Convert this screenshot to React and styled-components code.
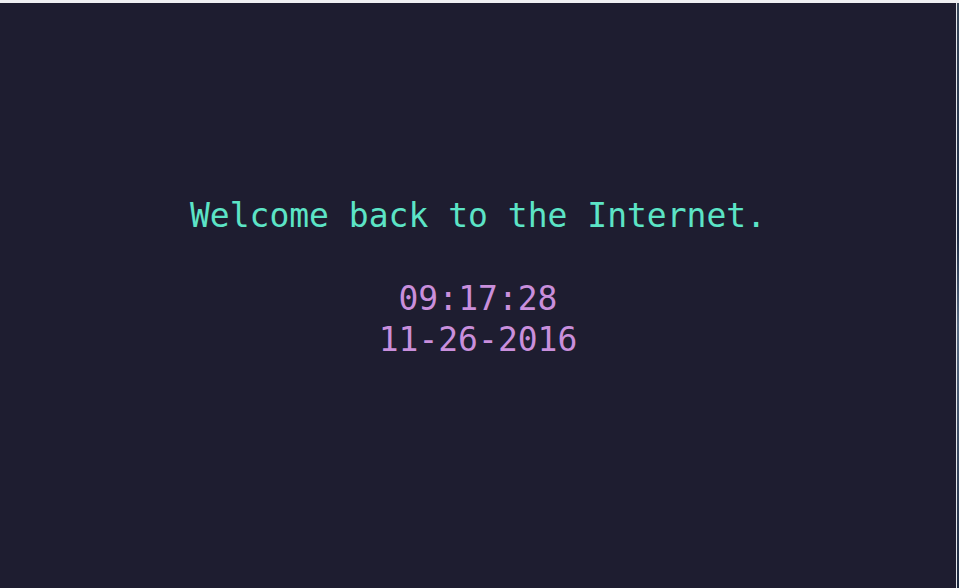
import React, { useState } from "react";
import styled, { createGlobalStyle } from "styled-components";

const GlobalStyle = createGlobalStyle`
  html, body {
    margin: 0;
    padding: 0;
    height: 100%;
    overflow: hidden;
    background: #1e1d30;
  }
  #root {
    height: 100%;
  }
`;

const Frame = styled.div`
  display: flex;
  height: 100vh;
  border-top: 3px solid #efeff2;
  box-sizing: border-box;
`;

const Screen = styled.main`
  flex: 1;
  display: flex;
  flex-direction: column;
  align-items: center;
  padding-top: 192px;
  background: #1e1d30;
  font-family: "DejaVu Sans Mono", "Liberation Mono", monospace;
  font-size: 33px;
  line-height: 41px;
`;

const Edge = styled.div`
  width: 2px;
  border-left: 1px solid #e6e8ec;
  background: linear-gradient(#3b4a5c, #23324a 40%, #5d7188 55%, #1e2a40);
`;

const Greeting = styled.p`
  margin: 0 0 42px;
  color: #5ce4c6;
`;

const Stamp = styled.div`
  color: #c98fdc;
  text-align: center;
`;

const pad = (n) => n.toString().padStart(2, "0");

const App = () => {
  const [now] = useState(new Date(2016, 10, 26, 9, 17, 28));

  return (
    <>
      <GlobalStyle />
      <Frame>
        <Screen>
          <Greeting>Welcome back to the Internet.</Greeting>
          <Stamp>
            {pad(now.getHours())}:{pad(now.getMinutes())}:{pad(now.getSeconds())}
          </Stamp>
          <Stamp>
            {pad(now.getMonth() + 1)}-{pad(now.getDate())}-{now.getFullYear()}
          </Stamp>
        </Screen>
        <Edge />
      </Frame>
    </>
  );
};

export default App;
